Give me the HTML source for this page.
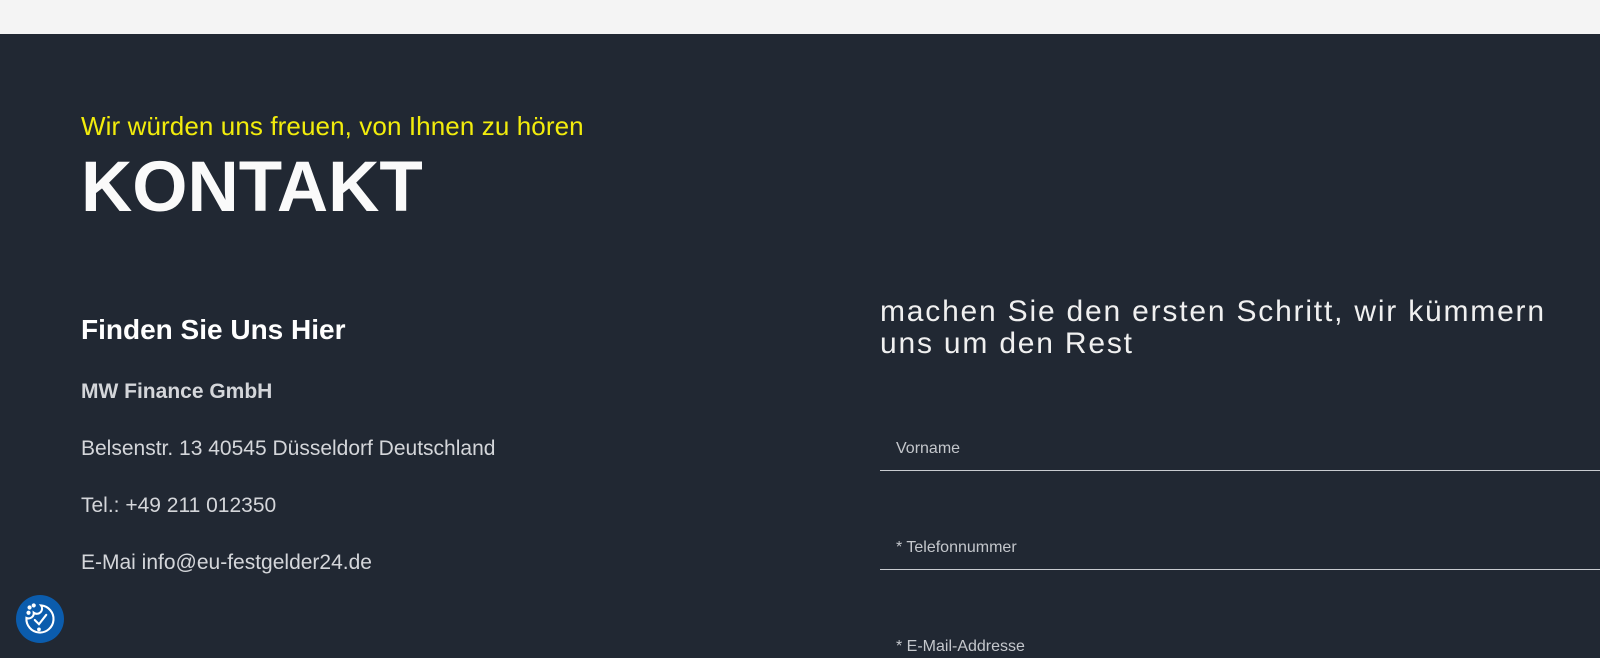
<!DOCTYPE html>
<html><head><meta charset="utf-8"><style>
*{margin:0;padding:0;box-sizing:border-box}
html,body{width:1600px;height:658px;overflow:hidden}
body{background:#212833;font-family:"Liberation Sans",sans-serif;position:relative}
.top{position:absolute;left:0;top:0;width:1600px;height:34px;background:#f4f4f4}
.t{position:absolute;white-space:nowrap;line-height:1}
.sub{left:81px;top:113px;font-size:26px;color:#f2ec0c;letter-spacing:0.1px}
.h{left:81px;top:152px;font-size:71px;font-weight:bold;color:#fafafa}
.f{left:81px;top:316px;font-size:28px;font-weight:bold;color:#fff}
.p{left:81px;font-size:21px;color:#d4d6da}
.r{left:880px;top:296px;font-size:30px;color:#f0f0f0;line-height:32px;letter-spacing:1.8px}
.in{position:absolute;left:880px;width:720px;height:1px;background:#c9ccd1}
.lab{position:absolute;left:896px;font-size:16px;color:#c4c7cc;line-height:1}
.ck{position:absolute;left:16px;top:595px;width:48px;height:48px;border-radius:50%;background:#0b5cad}
</style></head><body>
<div class="top"></div>
<div class="t sub">Wir würden uns freuen, von Ihnen zu hören</div>
<div class="t h">KONTAKT</div>
<div class="t f">Finden Sie Uns Hier</div>
<div class="t p" style="top:381px;font-weight:bold">MW Finance GmbH</div>
<div class="t p" style="top:438px">Belsenstr. 13 40545 Düsseldorf Deutschland</div>
<div class="t p" style="top:495px">Tel.: +49 211 012350</div>
<div class="t p" style="top:552px">E-Mai info@eu-festgelder24.de</div>
<div class="t r">machen Sie den ersten Schritt, wir kümmern<br>uns um den Rest</div>
<div class="in" style="top:470px"></div><div class="lab" style="top:441px">Vorname</div>
<div class="in" style="top:569px"></div><div class="lab" style="top:540px">* Telefonnummer</div>
<div class="lab" style="top:639px">* E-Mail-Addresse</div>
<div class="ck"><svg width="48" height="48" viewBox="0 0 46 46" fill="none" stroke="#fff" stroke-width="2" stroke-linecap="round">
<path d="M24 10 A13 13 0 1 1 10 22 A5 5 0 0 0 17 17 A5 5 0 0 0 24 10Z"/>
<path d="M18 24 L22 28 L29 19"/>
<circle cx="13" cy="12" r="1" fill="#fff"/><circle cx="17" cy="10" r="1" fill="#fff"/><circle cx="12" cy="17" r="1" fill="#fff"/>
<circle cx="22" cy="33" r="0.8" fill="#fff"/>
</svg></div>
</body></html>
